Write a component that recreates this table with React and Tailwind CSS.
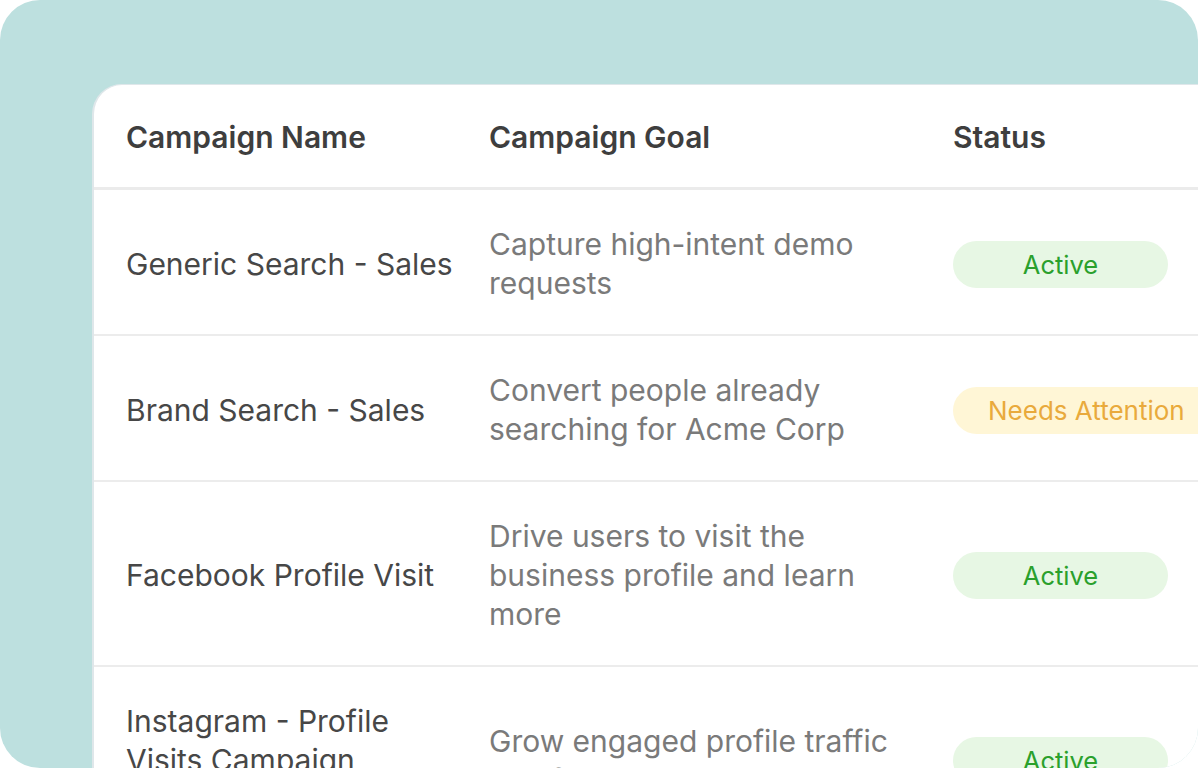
import React from "react";

const rows = [
  {
    name: "Generic Search - Sales",
    goal: "Capture high-intent demo requests",
    status: "active",
  },
  {
    name: "Brand Search - Sales",
    goal: "Convert people already searching for Acme Corp",
    status: "attention",
  },
  {
    name: "Facebook Profile Visit",
    goal: "Drive users to visit the business profile and learn more",
    status: "active",
  },
  {
    name: "Instagram - Profile Visits Campaign (Always On)",
    goal: "Grow engaged profile traffic and followers",
    status: "active",
  },
];

function Badge({ status }) {
  if (status === "attention") {
    return (
      <span className="inline-flex h-[47px] min-w-[215px] items-center justify-center whitespace-nowrap rounded-full bg-[#fff6d6] px-[35px] text-[26px] text-[#e9aa3c]">
        Needs Attention
      </span>
    );
  }
  return (
    <span className="inline-flex h-[47px] min-w-[215px] items-center justify-center whitespace-nowrap rounded-full bg-[#e7f7e4] px-[35px] text-[25.5px] text-[#2aa02c]">
      Active
    </span>
  );
}

export default function App() {
  return (
    <div
      className="h-[770px] w-[1198px] bg-white"
      style={{ fontFamily: "Inter, 'Noto Sans', sans-serif" }}
    >
      <div className="h-[768px] w-[1198px] overflow-hidden rounded-[40px] bg-[#bde0df] pl-[92px] pt-[84px]">
        <div className="h-[700px] w-[1200px] overflow-hidden rounded-tl-[30px] border-l-2 border-t border-[#dfe7ea] bg-white">
          <div className="grid h-[105px] grid-cols-[363px_464px_1fr] items-center border-b-[3px] border-[#ebebeb] pl-8 pt-[3px] text-[30px] font-semibold leading-[39px] text-[#3e3e3e]">
            <div>Campaign Name</div>
            <div>Campaign Goal</div>
            <div>Status</div>
          </div>
          {rows.map((r, i) => (
            <div
              key={i}
              className="grid grid-cols-[363px_464px_1fr] items-center border-b-2 border-[#ececec] pb-[31px] pl-8 pt-[35px] text-[30px] leading-[39px]"
            >
              <div className="w-[335px] text-[#474747]">{r.name}</div>
              <div className="w-[405px] text-[#7a7a7a]">{r.goal}</div>
              <div>
                <Badge status={r.status} />
              </div>
            </div>
          ))}
        </div>
      </div>
    </div>
  );
}
